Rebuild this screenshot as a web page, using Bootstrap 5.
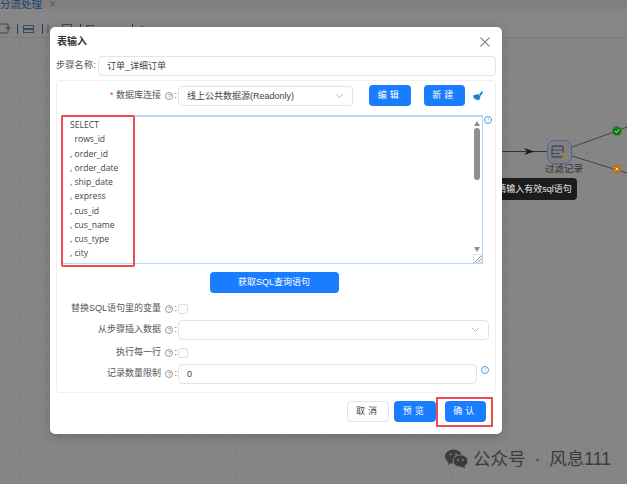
<!DOCTYPE html>
<html lang="zh-CN">
<head>
  <meta charset="UTF-8">
  <title>表输入</title>
  <link href="https://cdn.jsdelivr.net/npm/bootstrap@5.3.0/dist/css/bootstrap.min.css" rel="stylesheet">
  <style>
    html, body { height: 100%; }
    body {
      width: 627px;
      height: 484px;
      overflow: hidden;
      position: relative;
      font-family: "Liberation Sans", "Noto Sans CJK SC", sans-serif;
      font-size: 9px;
      color: #555;
      background: #858585;
    }
    .top-tabs { height: 9px; background: #808080; color: #16406e; font-size: 10.5px; line-height: 9px; }
    .top-tabs .tab-x { color: #5c5c5c; margin-left: 7px; font-size: 12px; }
    .tool-bar { height: 29px; background: #868686; border-bottom: 1px solid #7b7b7b; }
    .flow-canvas {
      height: 446px;
      background-color: #858585;
      background-image: radial-gradient(#747474 0.6px, transparent 0.8px);
      background-size: 13.5px 13.5px;
    }
    .flow-node { position: absolute; left: 547px; top: 140px; width: 25px; height: 24px; border: 1px solid #4b6a99; border-radius: 7px; background: #808080; }
    .flow-label { position: absolute; left: 545px; top: 162px; font-size: 9.5px; color: #333; white-space: nowrap; }
    .sql-tip {
      position: absolute; left: 492px; top: 178px; width: 85px; height: 22px;
      background: #1c1c1c; color: #e8e8e8; border-radius: 4px; font-size: 9px;
      line-height: 22px; text-align: center; white-space: nowrap;
    }
    .sql-tip::before {
      content: ""; position: absolute; left: -4px; top: 7px;
      border: 4px solid transparent; border-left: 0; border-right-color: #1c1c1c;
    }
    .watermark { position: absolute; left: 445px; top: 448px; color: #3b3b3b; font-size: 17.5px; line-height: 22px; display: flex; align-items: center; gap: 5px; white-space: nowrap; }
    .watermark .dot { margin: 0 9px; }

    .dlg { position: absolute; left: 50px; top: 27px; width: 452px; height: 407px; border: 0; border-radius: 5px; background: #fff; box-shadow: 0 2px 10px rgba(0,0,0,.2); }
    .dlg .modal-header { padding: 0 10px 0 7px; height: 29px; border: 0; align-items: center; }
    .dlg .modal-title { font-size: 10px; font-weight: 700; color: #333; }
    .dlg .modal-body { padding: 0 6px; flex: none; }
    .dlg .modal-footer { padding: 0 16px 0 0; border: 0; gap: 5px; margin-top: 8px; flex-wrap: nowrap; }
    .field { height: 20px; line-height: 18px; border: 1px solid #e3e3e3; border-radius: 4px; padding: 0 8px; background: #fff; color: #444; font-size: 9px; }
    .step-label { width: 42px; white-space: nowrap; letter-spacing: .3px; }
    .inner { height: 313px; border: 1px solid #efefef; border-radius: 4px; padding: 4px 6px 0 4px; margin-top: 4px; position: relative; }
    .row-label { width: 117px; flex: none; text-align: right; white-space: nowrap; padding-right: 1px; }
    .req { color: #ee3b3b; }
    .hint { display: inline-block; width: 8px; height: 8px; border: 1px solid #999; border-radius: 50%; font-size: 6px; line-height: 6px; text-align: center; color: #888; margin: 0 1px 0 2px; }
    .info-dot { display: inline-block; width: 8px; height: 8px; border: 1px solid #4a9cf0; border-radius: 50%; color: #4a9cf0; font-size: 6px; line-height: 6px; text-align: center; }
    .btn-blue { background: #1a7cff; border: 0; color: #fff; border-radius: 4px; font-size: 9px; padding: 0; height: 21px; width: 41.5px; line-height: 21px; }
    .btn-blue:hover { background: #1a7cff; color: #fff; }
    .btn-plain { background: #fff; border: 1px solid #e3e3e3; color: #444; border-radius: 4px; font-size: 9px; padding: 0; height: 21px; width: 42px; line-height: 19px; }
    .spread { letter-spacing: 3px; }
    .chev { flex: none; }
    .sql-box { height: 149px; width: 422px; margin-top: 9px; border: 1px solid #b5d8ff; border-top-width: 2px; position: relative; background: #fff; }
    .sql-text { width: 63px; height: 147px; padding: 1px 0 0 7px; margin: -2px 0 0 -1px; border: 2px solid #ef4a50; border-radius: 2px; box-sizing: content-box; font-family: "Open Sans", "Liberation Sans", sans-serif; font-size: 8.6px; line-height: 14.25px; color: #444; white-space: pre; overflow: hidden; }
    .sql-scroll { position: absolute; right: 0; top: 0; bottom: 0; width: 11px; display: flex; flex-direction: column; align-items: center; }
    .sql-scroll i { display: block; width: 0; height: 0; border: 3.5px solid transparent; }
    .sql-scroll .up { border-bottom: 5px solid #8d8d8d; border-top: 0; margin-top: 4px; }
    .sql-scroll .thumb { width: 6px; height: 52px; background: #8f8f8f; border-radius: 3px; margin-top: 2px; }
    .sql-scroll .down { border-top: 5px solid #8d8d8d; border-bottom: 0; margin-top: auto; margin-bottom: 11px; }
    .sql-grip { position: absolute; right: 0; bottom: 0; width: 9px; height: 9px; border: 1px solid #ddd; background: linear-gradient(135deg, #fff 55%, #999 55%, #999 62%, #fff 62%, #fff 75%, #999 75%, #999 82%, #fff 82%); }
    .box { display: inline-block; width: 10px; height: 10px; border: 1px solid #ddd; border-radius: 2px; background: #fff; }
    .sql-info { position: absolute; left: 427px; top: 35px; }
    .mark-box { position: absolute; border: 2px solid #ef4a50; }
  </style>
</head>
<body>
  <div class="top-tabs d-flex align-items-center"><span>分流处理</span><span class="tab-x">×</span></div>
  <div class="tool-bar">
    <svg width="150" height="28" viewBox="0 0 150 28">
      <g fill="none" stroke="#3e4a55">
        <path d="M0 15h8v9H0M5 19h5M8 17l2 2-2 2"/>
        <rect x="23.500" y="16.500" width="10" height="3"/><rect x="23.500" y="20.500" width="10" height="3"/>
        <path d="M48 16v8M50 18l2 2-2 2"/><rect x="62.500" y="15.500" width="9" height="9"/>
        <rect x="86.500" y="16.500" width="7" height="7"/><rect x="100.500" y="18.500" width="7" height="5"/><rect x="113.500" y="18.500" width="6" height="5"/>
      </g>
      <g stroke="#15406b"><path d="M17.500 15v10M42.500 15v10M80.500 15v10M132.500 15v10"/></g>
      <path d="M143 17a3 3 0 1 0 0 6" fill="none" stroke="#0d7a12"/>
    </svg>
  </div>
  <div class="flow-canvas"></div>

  <svg class="position-absolute top-0 start-0" width="627" height="484" viewBox="0 0 627 484">
    <path d="M502 151.500H547" stroke="#333" fill="none"/>
    <path d="M524 148l10 3.500-10 3.500 3-3.500z" fill="#1c1c1c"/>
    <path d="M572 147L617 131M572 156L617 170M617 131L627 127M617 170L627 173" stroke="#444" fill="none"/>
    <circle cx="617" cy="131" r="4.500" fill="#0d7a12"/>
    <path d="M615 131l1.500 1.500 2.500-3" stroke="#ddd" fill="none"/>
    <circle cx="617" cy="169" r="4.500" fill="#b87410"/>
    <path d="M615.500 167.500l3 3m0-3l-3 3" stroke="#ddd" fill="none"/>
  </svg>
  <div class="flow-node d-flex align-items-center justify-content-center">
    <svg width="17" height="17" viewBox="0 0 17 17"><rect x="1" y="2" width="11" height="11" rx="1.500" fill="none" stroke="#3c4f60" stroke-width="1.300"/><path d="M1 6h11M1 9.500h8" stroke="#3c4f60"/><path d="M9 9h7l-2.800 3v3h-1.400v-3z" fill="#a5823f"/></svg>
  </div>
  <div class="flow-label">过滤记录</div>
  <div class="sql-tip">请输入有效sql语句</div>

  <div class="watermark">
    <svg width="23" height="20" viewBox="0 0 23 20"><ellipse cx="8.500" cy="7.500" rx="8.500" ry="7" fill="#3b3b3b"/><path d="M4 12l-1 4 5-3z" fill="#3b3b3b"/><ellipse cx="15.500" cy="12" rx="7.500" ry="6.200" fill="#3b3b3b" stroke="#858585"/><path d="M19 16.500l1.500 3-5-2z" fill="#3b3b3b"/><circle cx="5.500" cy="5.500" r="1" fill="#858585"/><circle cx="11" cy="5.500" r="1" fill="#858585"/><circle cx="13" cy="11" r=".9" fill="#858585"/><circle cx="18" cy="11" r=".9" fill="#858585"/></svg>
    <span>公众号<span class="dot">·</span>风息111</span>
  </div>

  <div class="modal-content dlg">
    <div class="modal-header justify-content-between">
      <h5 class="modal-title">表输入</h5>
      <svg width="14" height="14" viewBox="0 0 14 14"><path d="M2.500 2.500l9 9m0-9l-9 9" stroke="#8a8a8a" stroke-width="1.100" fill="none"/></svg>
    </div>
    <div class="modal-body">
      <div class="d-flex align-items-center">
        <div class="step-label">步骤名称:</div>
        <div class="field flex-grow-1">订单_详细订单</div>
      </div>
      <div class="inner">
        <div class="d-flex align-items-center">
          <div class="row-label"><span class="req">*</span> 数据库连接 <span class="hint">?</span>:</div>
          <div class="field d-flex align-items-center justify-content-between" style="width:175px"><span>线上公共数据源(Readonly)</span>
            <svg class="chev" width="9" height="6" viewBox="0 0 9 6"><path d="M1 1l3.500 3.500L8 1" fill="none" stroke="#bbb"/></svg></div>
          <button class="btn btn-blue spread ms-3">编辑</button>
          <button class="btn btn-blue spread" style="margin-left:13px">新建</button>
          <svg class="ms-2" width="10" height="10" viewBox="0 0 10 10"><path d="M9 0L6 3.500 7.500 5 10 1.500zM0 4.500l5-1.500 2.500 2.500-1.500 4-2-1-1 1-.5-2-1.500.5z" fill="#1f82c9"/></svg>
        </div>
        <div class="sql-box">
          <div class="sql-text">SELECT
  rows_id
, order_id
, order_date
, ship_date
, express
, cus_id
, cus_name
, cus_type
, city</div>
          <div class="sql-scroll"><i class="up"></i><span class="thumb"></span><i class="down"></i></div>
          <div class="sql-grip"></div>
        </div>
        <span class="info-dot sql-info">!</span>
        <div class="text-center" style="margin-top:8px;padding-right:2px">
          <button class="btn btn-blue" style="width:129px">获取SQL查询语句</button>
        </div>
        <div class="d-flex align-items-center" style="height:10px;margin-top:11px">
          <div class="row-label">替换SQL语句里的变量 <span class="hint">?</span>:</div><span class="box"></span>
        </div>
        <div class="d-flex align-items-center" style="margin-top:6px">
          <div class="row-label">从步骤插入数据 <span class="hint">?</span>:</div>
          <div class="field d-flex align-items-center justify-content-end" style="width:312px"><svg class="chev" width="9" height="6" viewBox="0 0 9 6"><path d="M1 1l3.500 3.500L8 1" fill="none" stroke="#bbb"/></svg></div>
        </div>
        <div class="d-flex align-items-center" style="height:10px;margin-top:8px">
          <div class="row-label">执行每一行 <span class="hint">?</span>:</div><span class="box"></span>
        </div>
        <div class="d-flex align-items-center" style="margin-top:6px">
          <div class="row-label">记录数量限制 <span class="hint">?</span>:</div>
          <div class="field" style="width:299px">0</div>
          <span class="info-dot ms-1 mb-2">!</span>
        </div>
      </div>
    </div>
    <div class="modal-footer">
      <button class="btn btn-plain spread">取消</button>
      <button class="btn btn-blue spread">预览</button>
      <button class="btn btn-blue spread" style="margin-left:4px">确认</button>
    </div>
    <div class="mark-box" style="left:386px;top:370px;width:57px;height:30px"></div>
  </div>
</body>
</html>
